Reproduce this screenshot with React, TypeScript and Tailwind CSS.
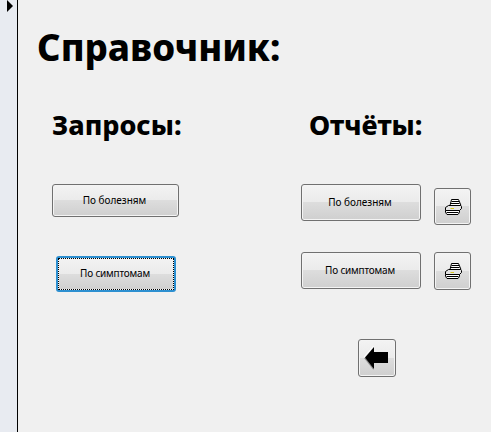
const FONT = "font-['Noto_Sans','DejaVu_Sans',sans-serif]";

function Btn({ className = "", children, focused = false }: { className?: string; children: React.ReactNode; focused?: boolean }) {
  return (
    <div
      className={`relative flex items-center justify-center rounded-[3px] border bg-[linear-gradient(to_bottom,#f3f3f3_0%,#ebebeb_49%,#dddddd_50%,#cfcfcf_100%)] shadow-[inset_0_0_0_1px_#f4f4f4] ${
        focused ? "border-[#2c8fd0] border-2" : "border-[#707070]"
      } ${className}`}
    >
      {focused && <div className="absolute inset-0 border border-dotted border-black" />}
      {children}
    </div>
  );
}

function Printer() {
  return (
    <svg width="18" height="16" viewBox="0 0 18 16" fill="none">
      <path d="M7.500 .5h7l2.500 6h-11z" fill="#fff" stroke="#000" />
      <path d="M7.500 2.500h7.500M7 4.500h8.500" stroke="#000" />
      <path d="M4.500 6.500h12l1 1v2l-2 2H1.500V8.500z" fill="#e4e4e4" stroke="#000" />
      <path d="M6.500 9.500h3.500" stroke="#d8c81e" strokeWidth="1" />
      <path d="M1.500 11.500h14v2l-1.500 2H3l-1.500-2z" fill="#fff" stroke="#000" />
      <path d="M2.500 13.500h12" stroke="#000" />
    </svg>
  );
}

function BackArrow() {
  return (
    <svg width="26" height="26" viewBox="0 0 26 26" fill="none">
      <path d="M0 13 9.500 25v-3L2 13z" fill="#8a8a8a" />
      <path d="M1 12.500 10 2v5h14v11H10v6z" fill="#000" />
      <path d="M0 12 9.500 1" stroke="#fff" strokeWidth="1" />
    </svg>
  );
}

function Label({ children, className = "" }: { children: React.ReactNode; className?: string }) {
  return <span className={`-translate-x-[1px] -translate-y-[1px] text-[10px] leading-none text-black ${className}`}>{children}</span>;
}

export default function App() {
  return (
    <div className={`flex h-[432px] w-[491px] overflow-hidden bg-[#f0f0f0] ${FONT}`}>
      <div className="w-[18px] shrink-0 border-r border-black bg-[#e8ebf1] pl-[7px]">
        <svg width="6" height="12" viewBox="0 0 6 12" className="block">
          <path d="M0 0 6 6 0 12z" fill="#000" />
        </svg>
      </div>
      <div className="flex-1 pl-[19px]">
        <h1 className="mt-[22px] h-[50px] text-[36.600px] font-extrabold leading-[50px] text-black">Справочник:</h1>
        <div className="flex">
          <div className="w-[264px] shrink-0">
            <h2 className="mt-[36px] pl-[15px] text-[27px] font-extrabold leading-[34px] text-black">Запросы:</h2>
            <Btn className="ml-[15px] mt-[42px] h-[33px] w-[127px]">
              <Label>По болезням</Label>
            </Btn>
            <Btn focused className="ml-[19px] mt-[39px] h-[36px] w-[120px]">
              <Label className="tracking-[-0.2px]">По симптомам</Label>
            </Btn>
          </div>
          <div className="flex-1">
            <h2 className="mt-[36px] pl-[8px] text-[27px] font-extrabold leading-[34px] text-black">Отчёты:</h2>
            <div className="mt-[42px] flex items-start gap-[13px]">
              <Btn className="h-[37px] w-[120px]">
                <Label>По болезням</Label>
              </Btn>
              <Btn className="mt-[4px] h-[37px] w-[37px]">
                <Printer />
              </Btn>
            </div>
            <div className="mt-[27px] flex items-start gap-[13px]">
              <Btn className="h-[37px] w-[120px]">
                <Label className="tracking-[-0.2px]">По симптомам</Label>
              </Btn>
              <Btn className="h-[38px] w-[37px]">
                <Printer />
              </Btn>
            </div>
            <Btn className="ml-[57px] mt-[49px] h-[38px] w-[38px]">
              <BackArrow />
            </Btn>
          </div>
        </div>
      </div>
    </div>
  );
}
